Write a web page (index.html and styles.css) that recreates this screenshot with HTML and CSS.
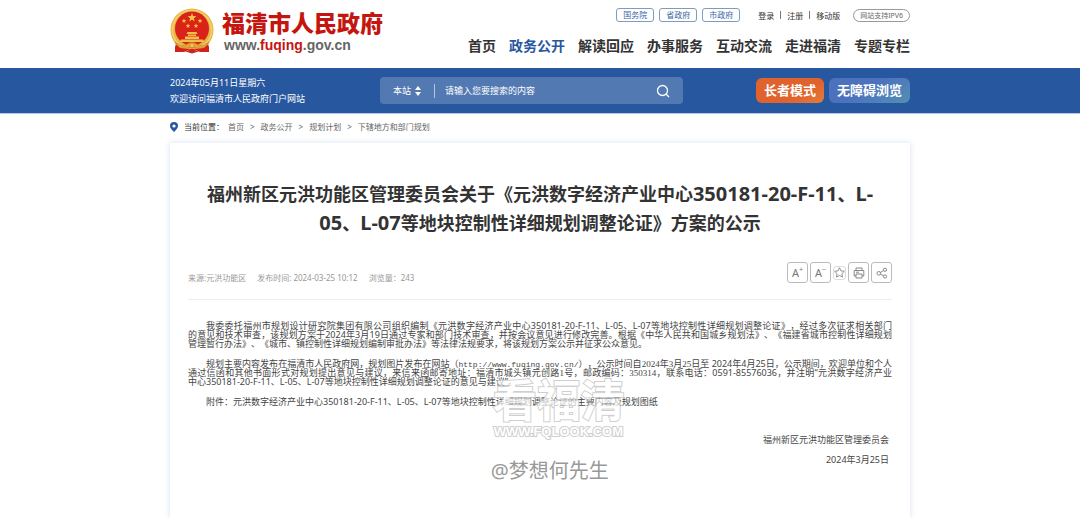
FILE: index.html
```html
<!DOCTYPE html>
<html lang="zh-CN">
<head>
<meta charset="utf-8">
<title>福清市人民政府</title>
<link rel="stylesheet" href="styles.css">
</head>
<body>
<header class="wrap header">
  <a class="brand" href="#">
    <svg class="emblem" viewBox="0 0 44 46" aria-hidden="true">
      <path d="M6 33L5 44L14 43L22 45.500L30 43L39 44L38 33Z" fill="#c9201a"/>
      <circle cx="22" cy="22" r="21.500" fill="#e6b347"/>
      <circle cx="22" cy="22" r="19.500" fill="none" stroke="#f3cd63" stroke-width="2"/>
      <circle cx="22" cy="20.500" r="17" fill="#da2318"/>
      <path d="M22 5L23.100 8.100L26.400 8.200L23.800 10.200L24.700 13.400L22 11.500L19.300 13.400L20.200 10.200L17.600 8.200L20.900 8.100Z" fill="#f6c649"/>
      <g fill="#f3bc42"><path id="s" d="M14 10.500l.7 1.500 1.600.2-1.200 1.100.3 1.600-1.400-.8-1.400.8.3-1.600-1.200-1.100 1.600-.2z"/><use href="#s" x="16"/><use href="#s" x="4" y="5"/><use href="#s" x="12" y="5"/></g>
      <path d="M16.500 26L17.500 24H26.500L27.500 26ZM18 26.500H26V28H18ZM15 28.500H29V31H15ZM11 31.500H33L34.500 34H9.500Z" fill="#f2bd4a"/>
      <path d="M5 34L11 38Q16 38 18 35.500Q22 33 26 35.500Q28 38 33 38L39 34L34 40Q27 41 22 39Q17 41 10 40Z" fill="#e3a938" stroke="#bd6b20" stroke-width=".5"/>
      <circle cx="22" cy="37.500" r="2.200" fill="#f1c559" stroke="#bd6b20" stroke-width=".5"/>
      <path d="M5 38L10 40Q16 41 20 40.500L14 44L5 44ZM39 38L34 40Q28 41 24 40.500L30 44L39 44ZM17 42L22 40.500L27 42L22 45Z" fill="#d2221a"/>
    </svg>
    <span class="brand-text">
      <span class="brand-name">福清市人民政府</span>
      <span class="brand-url">www.<b>fuqing</b>.gov.cn</span>
    </span>
  </a>
  <div class="header-right">
    <div class="toplinks">
      <a class="gov" href="#">国务院</a>
      <a class="gov" href="#">省政府</a>
      <a class="gov" href="#">市政府</a>
      <div class="account"><a href="#">登录</a><i></i><a href="#">注册</a><i></i><a href="#">移动版</a></div>
      <a class="ipv6" href="#">网站支持IPV6</a>
    </div>
    <nav class="nav">
      <a href="#">首页</a><a class="active" href="#">政务公开</a><a href="#">解读回应</a><a href="#">办事服务</a><a href="#">互动交流</a><a href="#">走进福清</a><a href="#">专题专栏</a>
    </nav>
  </div>
</header>

<div class="bar">
  <div class="wrap bar-in">
    <div class="welcome">2024年05月11日星期六<br>欢迎访问福清市人民政府门户网站</div>
    <form class="search">
      <select aria-label="搜索范围"><option>本站</option></select>
      <svg class="updown" viewBox="0 0 6 12" aria-hidden="true"><path d="M0 5L3 1L6 5ZM0 7L3 11L6 7Z" fill="#fff"/></svg>
      <span class="divider"></span>
      <input type="text" aria-label="搜索内容" placeholder="请输入您要搜索的内容">
      <button type="button" aria-label="搜索"><svg viewBox="0 0 14 14" aria-hidden="true"><circle cx="6.500" cy="6.500" r="5" fill="none" stroke="#fff" stroke-width="1.300"/><path d="M10 10L13 13" stroke="#fff" stroke-width="1.300"/></svg></button>
    </form>
    <div class="modes">
      <button class="elder" type="button">长者模式</button>
      <button class="access" type="button">无障碍浏览</button>
    </div>
  </div>
</div>

<main class="wrap">
  <nav class="crumbs" aria-label="当前位置">
    <svg viewBox="0 0 8 10" aria-hidden="true"><path d="M4 0A4 4 0 0 1 8 4C8 6 6 8 4 10C2 8 0 6 0 4A4 4 0 0 1 4 0Z" fill="#27589f"/><circle cx="4" cy="4" r="1.600" fill="#fff"/></svg>
    <span class="here">当前位置：</span>
    <a href="#">首页</a><span>&gt;</span><a href="#">政务公开</a><span>&gt;</span><a href="#">规划计划</a><span>&gt;</span><a href="#">下辖地方和部门规划</a>
  </nav>

  <article class="card">
    <h1>福州新区元洪功能区管理委员会关于《元洪数字经济产业中心<span class="latin">350181-20-F-11</span>、<span class="latin">L-</span><br><span class="latin">05</span>、<span class="latin">L-07</span>等地块控制性详细规划调整论证》方案的公示</h1>
    <div class="meta">
      <span>来源:元洪功能区</span><span>发布时间: 2024-03-25 10:12</span><span>浏览量：243</span>
      <div class="tools">
        <button type="button" aria-label="放大字体">A<sup>+</sup></button>
        <button type="button" aria-label="缩小字体">A<sup>−</sup></button>
        <button class="fav" type="button" aria-label="收藏"><svg viewBox="0 0 12 12" aria-hidden="true"><path d="M6 .8L7.600 4.200L11.300 4.700L8.600 7.300L9.300 11L6 9.200L2.700 11L3.400 7.300L.7 4.700L4.400 4.200Z"/></svg></button>
        <button type="button" aria-label="打印"><svg viewBox="0 0 12 12" aria-hidden="true"><path d="M3 3V1H9V3M3 9H1.200V3.500H10.800V9H9M3 7H9V11H3ZM3 5.200H6"/></svg></button>
        <button type="button" aria-label="分享"><svg viewBox="0 0 12 12" aria-hidden="true"><circle cx="2.800" cy="6.300" r="1.800"/><circle cx="9" cy="2.800" r="1.600"/><circle cx="9" cy="9.500" r="1.600"/><path d="M4.400 5.400L7.600 3.600M4.400 7.100L7.600 8.800"/></svg></button>
      </div>
    </div>
    <div class="content">
      <p><span class="full first">我委委托福州市规划设计研究院集团有限公司组织编制《元洪数字经济产业中心350181-20-F-11、L-05、L-07等地块控制性详细规划调整论证》，经过多次征求相关部门</span><span class="full">的意见和技术审查，该规划方案于2024年3月19日通过专家和部门技术审查，并按会议意见进行修改完善。根据《中华人民共和国城乡规划法》、《福建省城市控制性详细规划</span>管理暂行办法》、《城市、镇控制性详细规划编制审批办法》等法律法规要求，将该规划方案公示并征求公众意见。</p>
      <p><span class="full first">规划主要内容发布在福清市人民政府网，规划图片发布在网站（<span class="mono">http://www.fuqing.gov.cn/</span>），公示时间自<span class="song">2024</span>年<span class="song">3</span>月<span class="song">25</span>日至 2024年4月25日，公示期间，欢迎单位和个人</span><span class="full">通过信函和其他书面形式对规划提出意见与建议，来信来函邮寄地址：福清市城头镇元创路<span class="song">1</span>号，邮政编码：<span class="song">350314</span>，联系电话：0591-85576036，并注明“元洪数字经济产业</span>中心350181-20-F-11、L-05、L-07等地块控制性详细规划调整论证的意见与建议”。</p>
      <p><span class="first">附件：元洪数字经济产业中心350181-20-F-11、L-05、L-07等地块控制性详细规划调整论证的主要内容及规划图纸</span></p>
      <div class="mark"><span class="mark-name">看福清</span><span class="mark-url">WWW.FQLOOK.COM</span><span class="mark-user">@梦想何先生</span></div>
    </div>
    <div class="sign">福州新区元洪功能区管理委员会<br>2024年3月25日</div>
  </article>
</main>
</body>
</html>
```
FILE: styles.css
```css
* { box-sizing: border-box; }
body {
  margin: 0;
  background: #fff;
  color: #333;
  font: 9px/1.5 "Noto Sans", "Noto Sans CJK SC", sans-serif;
}
a { color: inherit; text-decoration: none; }
button, input, select { font: inherit; color: inherit; border: 0; padding: 0; margin: 0; background: none; }
svg { display: block; flex: none; }
.wrap { max-width: 740px; margin: 0 auto; }

.header { display: flex; justify-content: space-between; height: 68px; padding-top: 8px; }
.brand { display: flex; gap: 8px; align-items: flex-start; }
.emblem { width: 44px; height: 46px; }
.brand-text { display: flex; flex-direction: column; }
.brand-name { color: #c5150f; font-size: 23px; line-height: 29px; font-weight: 900; font-family: "Noto Sans CJK SC", sans-serif; }
.brand-url { color: #666; font: bold 14px/16px "Liberation Sans", sans-serif; padding-left: 2px; }
.brand-url b { color: #c5150f; }
.header-right { display: flex; flex-direction: column; align-items: flex-end; gap: 13px; }
.toplinks { display: flex; align-items: center; gap: 5px; font-size: 8px; line-height: 11px; }
.gov { border: 1px solid #7d9cc4; border-radius: 3px; color: #3c669f; padding: 0 6px; line-height: 12px; }
.account { display: flex; align-items: center; gap: 6px; margin: 0 8px 0 13px; }
.account i { width: 1px; height: 8px; background: #777; }
.ipv6 { border: 1px solid #999; border-radius: 8px; color: #666; padding: 0 6px; font-size: 7px; }
.nav { display: flex; gap: 13px; font-size: 14px; line-height: 22px; font-weight: bold; }
.nav .active { color: #27589f; }

.bar { background: #27589f; color: #fff; border-bottom: 1px solid #b5c7de; }
.bar-in { display: flex; align-items: center; height: 45px; }
.welcome { width: 210px; line-height: 16px; }
.search { display: flex; align-items: center; width: 303px; height: 27px; border-radius: 4px; background: #5279b2; padding: 0 13px; }
.search select { appearance: none; width: 22px; }
.search option { color: #333; }
.updown { width: 6px; height: 12px; margin-right: 13px; }
.divider { width: 1px; height: 14px; background: #b5c7de; margin-right: 10px; }
.search input { flex: 1; min-width: 0; outline: none; }
.search input::placeholder { color: #fff; opacity: 1; }
.search button svg { width: 14px; height: 14px; }
.modes { display: flex; gap: 5px; margin-left: auto; }
.modes button { height: 25px; border-radius: 6px; padding: 0 8px; font-size: 13px; font-weight: bold; white-space: nowrap; }
.elder { background: linear-gradient(150deg, #e0632d 65%, #e47d3a); }
.access { background: linear-gradient(150deg, #4c72bd 45%, #5390b4); }

.crumbs { display: flex; align-items: center; gap: 6px; height: 29px; padding-bottom: 3px; color: #666; font-size: 8px; }
.crumbs svg { width: 8px; height: 10px; }
.crumbs .here { color: #333; margin-right: -2px; }
.card { padding: 37px 18px 48px; background: #fff; box-shadow: 0 0 6px #d5dff0; }
h1 { margin: 0; font-size: 18px; line-height: 29px; text-align: center; font-weight: bold; color: #333; }
.latin { font-size: 20px; line-height: 20px; }
.meta { display: flex; align-items: center; gap: 11px; margin-top: 8px; height: 54px; border-bottom: 1px solid #eee; color: #999; font-size: 8px; }
.meta > span { padding-top: 10px; }
.tools { display: flex; align-items: center; gap: 2px; margin-left: auto; }
.tools button { display: flex; align-items: center; justify-content: center; width: 21px; height: 21px; border: 1px solid #bbb; border-radius: 3px; color: #777; font-size: 11px; line-height: 12px; }
.tools sup { font-size: 7px; line-height: 7px; align-self: flex-start; margin-top: 3px; }
.tools svg { width: 12px; height: 12px; fill: none; stroke: #888; stroke-width: 1; }
.tools .fav { width: 13px; height: 14px; border-color: #ddd; }
.tools .fav svg { width: 11px; height: 11px; }
.content { position: relative; margin-top: 21px; color: #444; line-height: 9px; text-spacing-trim: space-all; }
.content p { margin: 0 0 11px; }
.full { display: block; text-align: justify; text-align-last: justify; }
.first { display: block; text-indent: 2em; }
.mono { font-family: "Liberation Mono", monospace; font-size: 8px; line-height: 0; }
.song { font-family: "Liberation Serif", serif; line-height: 0; }
.mark { position: absolute; left: 43%; top: 56px; display: flex; flex-direction: column; align-items: flex-start; white-space: nowrap; pointer-events: none; }
.mark-name, .mark-url { padding-left: 2px; color: #fff; paint-order: stroke fill; -webkit-text-stroke: 2px #bbb; opacity: .7; }
.mark-name { font-size: 44px; line-height: 46px; font-weight: bold; }
.mark-url { margin-top: 1px; padding-left: 3px; font: bold 13px/16px "Liberation Sans", sans-serif; }
.mark-user { margin-top: 16px; font-size: 20px; line-height: 30px; color: #999; }
.sign { margin-top: 24px; padding-right: 3px; text-align: right; line-height: 20px; color: #444; }
```
